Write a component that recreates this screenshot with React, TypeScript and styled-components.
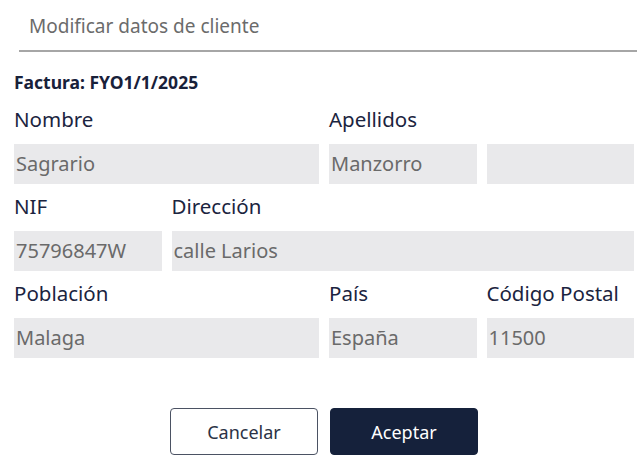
import React from "react";
import styled, { createGlobalStyle } from "styled-components";

const Global = createGlobalStyle`
  html, body { margin: 0; padding: 0; background: #ffffff; }
  body { font-family: "Noto Sans", "Open Sans", sans-serif; }
  * { box-sizing: border-box; }
`;

const Page = styled.div`
  width: 642px;
  height: 462px;
  padding: 0 8px 0 14px;
  display: flex;
  flex-direction: column;
`;

const TitleBar = styled.div`
  margin: 0 -3px 0 5px;
  height: 52px;
  padding: 13px 0 0 10px;
  border-bottom: 2px solid #a6a6a6;
  color: #6b6b6b;
  font-size: 19px;
  line-height: 26px;
`;

const Invoice = styled.div`
  margin-top: 19px;
  height: 22px;
  font-size: 17.5px;
  line-height: 22px;
  font-weight: 700;
  color: #18213a;
`;

const Form = styled.div`
  margin-top: 4px;
  display: grid;
  grid-template-columns: repeat(4, 1fr);
  column-gap: 10px;
  row-gap: 0;
`;

const Field = styled.div<{ $span?: number }>`
  grid-column: span ${(p) => p.$span ?? 1};
  display: flex;
  flex-direction: column;
`;

const Label = styled.div`
  height: 47px;
  display: flex;
  align-items: center;
  padding-bottom: 4px;
  font-size: 20.5px;
  color: #1b2440;
  white-space: nowrap;
`;

const Input = styled.div`
  height: 40px;
  background: #e9e9eb;
  display: flex;
  align-items: center;
  padding-left: 2px;
  padding-bottom: 2px;
  font-size: 20px;
  color: #6a6a6a;
  white-space: nowrap;
  overflow: hidden;
`;

const Actions = styled.div`
  margin-top: 50px;
  display: flex;
  justify-content: center;
  gap: 12px;
`;

const Button = styled.button<{ $primary?: boolean }>`
  width: 148px;
  height: 47px;
  border-radius: 4px;
  font-family: "Noto Sans", "Open Sans", sans-serif;
  font-size: 18px;
  cursor: pointer;
  border: 1px solid ${(p) => (p.$primary ? "#15213b" : "#4b5263")};
  background: ${(p) => (p.$primary ? "#15213b" : "#ffffff")};
  color: ${(p) => (p.$primary ? "#ffffff" : "#2b3245")};
`;

export default function App() {
  return (
    <>
      <Global />
      <Page>
        <TitleBar>Modificar datos de cliente</TitleBar>
        <Invoice>Factura: FYO1/1/2025</Invoice>
        <Form>
          <Field $span={2}>
            <Label>Nombre</Label>
            <Input>Sagrario</Input>
          </Field>
          <Field>
            <Label>Apellidos</Label>
            <Input>Manzorro</Input>
          </Field>
          <Field>
            <Label>&nbsp;</Label>
            <Input />
          </Field>
          <Field>
            <Label>NIF</Label>
            <Input>75796847W</Input>
          </Field>
          <Field $span={3}>
            <Label>Dirección</Label>
            <Input>calle Larios</Input>
          </Field>
          <Field $span={2}>
            <Label>Población</Label>
            <Input>Malaga</Input>
          </Field>
          <Field>
            <Label>País</Label>
            <Input>España</Input>
          </Field>
          <Field>
            <Label>Código Postal</Label>
            <Input>11500</Input>
          </Field>
        </Form>
        <Actions>
          <Button>Cancelar</Button>
          <Button $primary>Aceptar</Button>
        </Actions>
      </Page>
    </>
  );
}
